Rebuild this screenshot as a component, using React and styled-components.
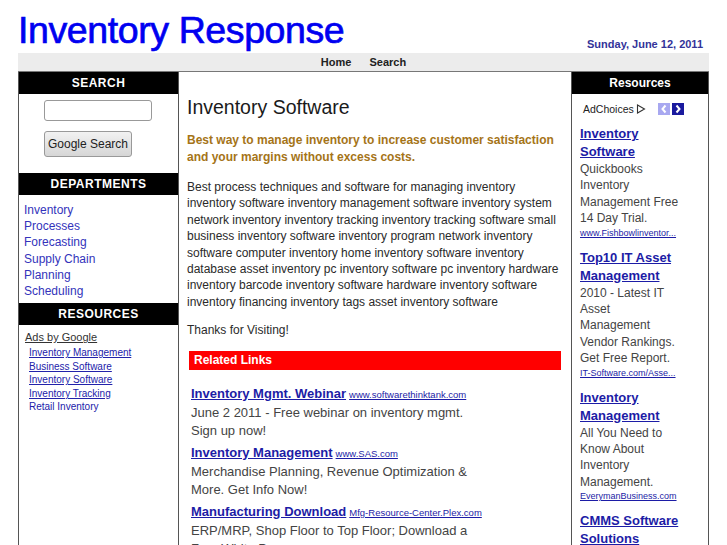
import React from 'react';
import styled, { createGlobalStyle } from 'styled-components';

const GlobalStyle = createGlobalStyle`
  body {
    margin: 0;
    background: #fff;
    font-family: 'Liberation Sans', Arial, sans-serif;
  }
`;

const Page = styled.div`
  width: 691px;
  margin: 0 18px;
`;

const Header = styled.header`
  display: flex;
  justify-content: space-between;
  align-items: flex-end;
  height: 53px;
`;

const Title = styled.h1`
  margin: 0 0 2px 0;
  font-size: 37.5px;
  font-weight: normal;
  color: #0000f0;
  letter-spacing: -0.4px;
  line-height: 42px;
  -webkit-text-stroke: 0.7px #0000f0;
`;

const DateText = styled.div`
  font-size: 11px;
  font-weight: bold;
  color: #333399;
  margin: 0 6px 3px 0;
`;

const Nav = styled.nav`
  display: flex;
  justify-content: center;
  gap: 18px;
  height: 18px;
  align-items: center;
  background: #ececec;
  border-bottom: 1px solid #777;
  font-size: 11px;
  font-weight: bold;
  color: #222;
`;

const Columns = styled.div`
  display: grid;
  grid-template-columns: 161px 1fr 138px;
  align-items: stretch;
  min-height: 480px;
`;

const Side = styled.aside`
  border-left: 1px solid #555;
  border-right: 1px solid #555;
`;

const BlockHead = styled.div`
  background: #000;
  color: #fff;
  font-size: 12px;
  font-weight: bold;
  text-align: center;
  height: 22px;
  line-height: 22px;
  letter-spacing: ${(p) => (p.$caps ? '0.5px' : '0')};
`;

const SearchBox = styled.div`
  display: flex;
  flex-direction: column;
  align-items: flex-start;
  gap: 10px;
  padding: 6px 0 16px 25px;
`;

const SearchInput = styled.input`
  width: 108px;
  height: 21px;
  box-sizing: border-box;
  border: 1px solid #999;
  border-radius: 3px;
`;

const SearchButton = styled.button`
  width: 88px;
  height: 26px;
  padding: 0;
  border: 1px solid #999;
  border-radius: 3px;
  background: linear-gradient(#f2f2f2, #d6d6d6);
  font-family: 'Liberation Sans', Arial, sans-serif;
  font-size: 12px;
  color: #222;
`;

const DeptList = styled.ul`
  list-style: none;
  margin: 0;
  padding: 7px 0 4px 5px;
`;

const DeptItem = styled.li`
  font-size: 12px;
  line-height: 16.2px;
  color: #3333bb;
`;

const AdsBlock = styled.div`
  padding: 6px 0 0 6px;
`;

const AdsBy = styled.div`
  font-size: 11px;
  color: #333;
  text-decoration: underline;
  margin-bottom: 3px;
`;

const SmallLink = styled.div`
  font-size: 10px;
  line-height: 13.5px;
  color: #2222aa;
  padding-left: 4px;
  text-decoration: ${(p) => (p.$plain ? 'none' : 'underline')};
`;

const Main = styled.main`
  padding: 24px 10px 0 8px;
  color: #222;
`;

const PageTitle = styled.h2`
  margin: 0 0 13px;
  font-size: 19.5px;
  font-weight: normal;
  color: #1a1a1a;
`;

const Lead = styled.p`
  margin: 0 0 13px;
  font-size: 12px;
  font-weight: bold;
  line-height: 17px;
  color: #a57418;
`;

const Body = styled.p`
  margin: 0 0 12px;
  font-size: 12px;
  line-height: 16.4px;
  color: #2a2a2a;
`;

const RedBar = styled.div`
  margin: 12px 0 14px 2px;
  background: #ff0000;
  color: #fff;
  font-size: 12px;
  font-weight: bold;
  height: 19px;
  line-height: 18px;
  padding-left: 5px;
`;

const Ad = styled.div`
  padding-left: 4px;
  margin-bottom: 3px;
  width: 300px;
`;

const AdHead = styled.div`
  white-space: nowrap;
  line-height: 18px;
`;

const AdTitle = styled.a`
  font-size: 13px;
  font-weight: bold;
  color: #1c1ca6;
  text-decoration: underline;
`;

const AdUrl = styled.a`
  font-size: 9.5px;
  color: #1c1ca6;
  text-decoration: underline;
  margin-left: 3px;
`;

const AdDesc = styled.div`
  font-size: 13px;
  line-height: 18px;
  color: #444;
`;

const Right = styled.aside`
  border-left: 1px solid #555;
  border-right: 1px solid #555;
`;

const AdChoices = styled.div`
  display: flex;
  align-items: center;
  padding: 8px 0 0 11px;
  font-size: 10.5px;
  color: #222;
  height: 14px;
`;

const Arrows = styled.div`
  display: flex;
  gap: 2px;
  margin-left: 12px;
`;

const Arrow = styled.span`
  width: 12px;
  height: 12px;
  background: ${(p) => (p.$on ? '#1a1a9e' : '#a8a8f0')};
  display: flex;
  align-items: center;
  justify-content: center;
`;

const SideAds = styled.div`
  padding: 9px 28px 0 8px;
`;

const SideAd = styled.div`
  margin-bottom: 9px;
`;

const SideTitle = styled.a`
  display: block;
  font-size: 13px;
  font-weight: bold;
  color: #1c1ca6;
  text-decoration: underline;
  line-height: 18px;
  white-space: nowrap;
`;

const SideDesc = styled.div`
  font-size: 12px;
  line-height: 16.4px;
  color: #444;
`;

const SideUrl = styled.a`
  display: block;
  font-size: 9px;
  color: #1c1ca6;
  text-decoration: underline;
  line-height: 13px;
  white-space: nowrap;
`;

const ChoicesIcon = () => (
  <svg width="10" height="10" viewBox="0 0 10 10" style={{ marginLeft: 2 }}>
    <path d="M1.5 1 L8.5 5 L1.5 9 Z" fill="none" stroke="#333" strokeWidth="1.1" />
  </svg>
);

const Chevron = ({ dir }) => (
  <svg width="8" height="10" viewBox="0 0 8 10">
    <path
      d={dir === 'left' ? 'M5.5 1.5 L2.5 5 L5.5 8.5' : 'M2.5 1.5 L5.5 5 L2.5 8.5'}
      fill="none"
      stroke="#fff"
      strokeWidth="2"
    />
  </svg>
);

const departments = ['Inventory', 'Processes', 'Forecasting', 'Supply Chain', 'Planning', 'Scheduling'];

const adLinks = ['Inventory Management', 'Business Software', 'Inventory Software', 'Inventory Tracking'];

const mainAds = [
  {
    title: 'Inventory Mgmt. Webinar',
    url: 'www.softwarethinktank.com',
    desc: 'June 2 2011 - Free webinar on inventory mgmt. Sign up now!',
  },
  {
    title: 'Inventory Management',
    url: 'www.SAS.com',
    desc: 'Merchandise Planning, Revenue Optimization & More. Get Info Now!',
  },
  {
    title: 'Manufacturing Download',
    url: 'Mfg-Resource-Center.Plex.com',
    desc: 'ERP/MRP, Shop Floor to Top Floor; Download a Free White Paper.',
  },
];

const sideAds = [
  {
    title: ['Inventory', 'Software'],
    desc: 'Quickbooks Inventory Management Free 14 Day Trial.',
    url: 'www.Fishbowlinventor...',
  },
  {
    title: ['Top10 IT Asset', 'Management'],
    desc: '2010 - Latest IT Asset Management Vendor Rankings. Get Free Report.',
    url: 'IT-Software.com/Asse...',
  },
  {
    title: ['Inventory', 'Management'],
    desc: 'All You Need to Know About Inventory Management.',
    url: 'EverymanBusiness.com',
  },
  {
    title: ['CMMS Software', 'Solutions'],
    desc: 'Maintenance software for every industry.',
    url: 'www.CMMS-Software.com',
  },
];

function App() {
  return (
    <>
      <GlobalStyle />
      <Page>
        <Header>
          <Title>Inventory Response</Title>
          <DateText>Sunday, June 12, 2011</DateText>
        </Header>
        <Nav>
          <span>Home</span>
          <span>Search</span>
        </Nav>
        <Columns>
          <Side>
            <BlockHead $caps>SEARCH</BlockHead>
            <SearchBox>
              <SearchInput />
              <SearchButton>Google Search</SearchButton>
            </SearchBox>
            <BlockHead $caps>DEPARTMENTS</BlockHead>
            <DeptList>
              {departments.map((d) => (
                <DeptItem key={d}>{d}</DeptItem>
              ))}
            </DeptList>
            <BlockHead $caps>RESOURCES</BlockHead>
            <AdsBlock>
              <AdsBy>Ads by Google</AdsBy>
              {adLinks.map((l) => (
                <SmallLink key={l}>{l}</SmallLink>
              ))}
              <SmallLink $plain>Retail Inventory</SmallLink>
            </AdsBlock>
          </Side>

          <Main>
            <PageTitle>Inventory Software</PageTitle>
            <Lead>
              Best way to manage inventory to increase customer satisfaction and your margins
              without excess costs.
            </Lead>
            <Body>
              Best process techniques and software for managing inventory inventory software
              inventory management software inventory system network inventory inventory tracking
              inventory tracking software small business inventory software inventory program
              network inventory software computer inventory home inventory software inventory
              database asset inventory pc inventory software pc inventory hardware inventory
              barcode inventory software hardware inventory software inventory financing inventory
              tags asset inventory software
            </Body>
            <Body>Thanks for Visiting!</Body>
            <RedBar>Related Links</RedBar>
            {mainAds.map((a) => (
              <Ad key={a.title}>
                <AdHead>
                  <AdTitle>{a.title}</AdTitle>
                  <AdUrl>{a.url}</AdUrl>
                </AdHead>
                <AdDesc>{a.desc}</AdDesc>
              </Ad>
            ))}
          </Main>

          <Right>
            <BlockHead>Resources</BlockHead>
            <AdChoices>
              AdChoices
              <ChoicesIcon />
              <Arrows>
                <Arrow>
                  <Chevron dir="left" />
                </Arrow>
                <Arrow $on>
                  <Chevron dir="right" />
                </Arrow>
              </Arrows>
            </AdChoices>
            <SideAds>
              {sideAds.map((a) => (
                <SideAd key={a.title[0] + a.title[1]}>
                  {a.title.map((t) => (
                    <SideTitle key={t}>{t}</SideTitle>
                  ))}
                  <SideDesc>{a.desc}</SideDesc>
                  <SideUrl>{a.url}</SideUrl>
                </SideAd>
              ))}
            </SideAds>
          </Right>
        </Columns>
      </Page>
    </>
  );
}

export default App;
